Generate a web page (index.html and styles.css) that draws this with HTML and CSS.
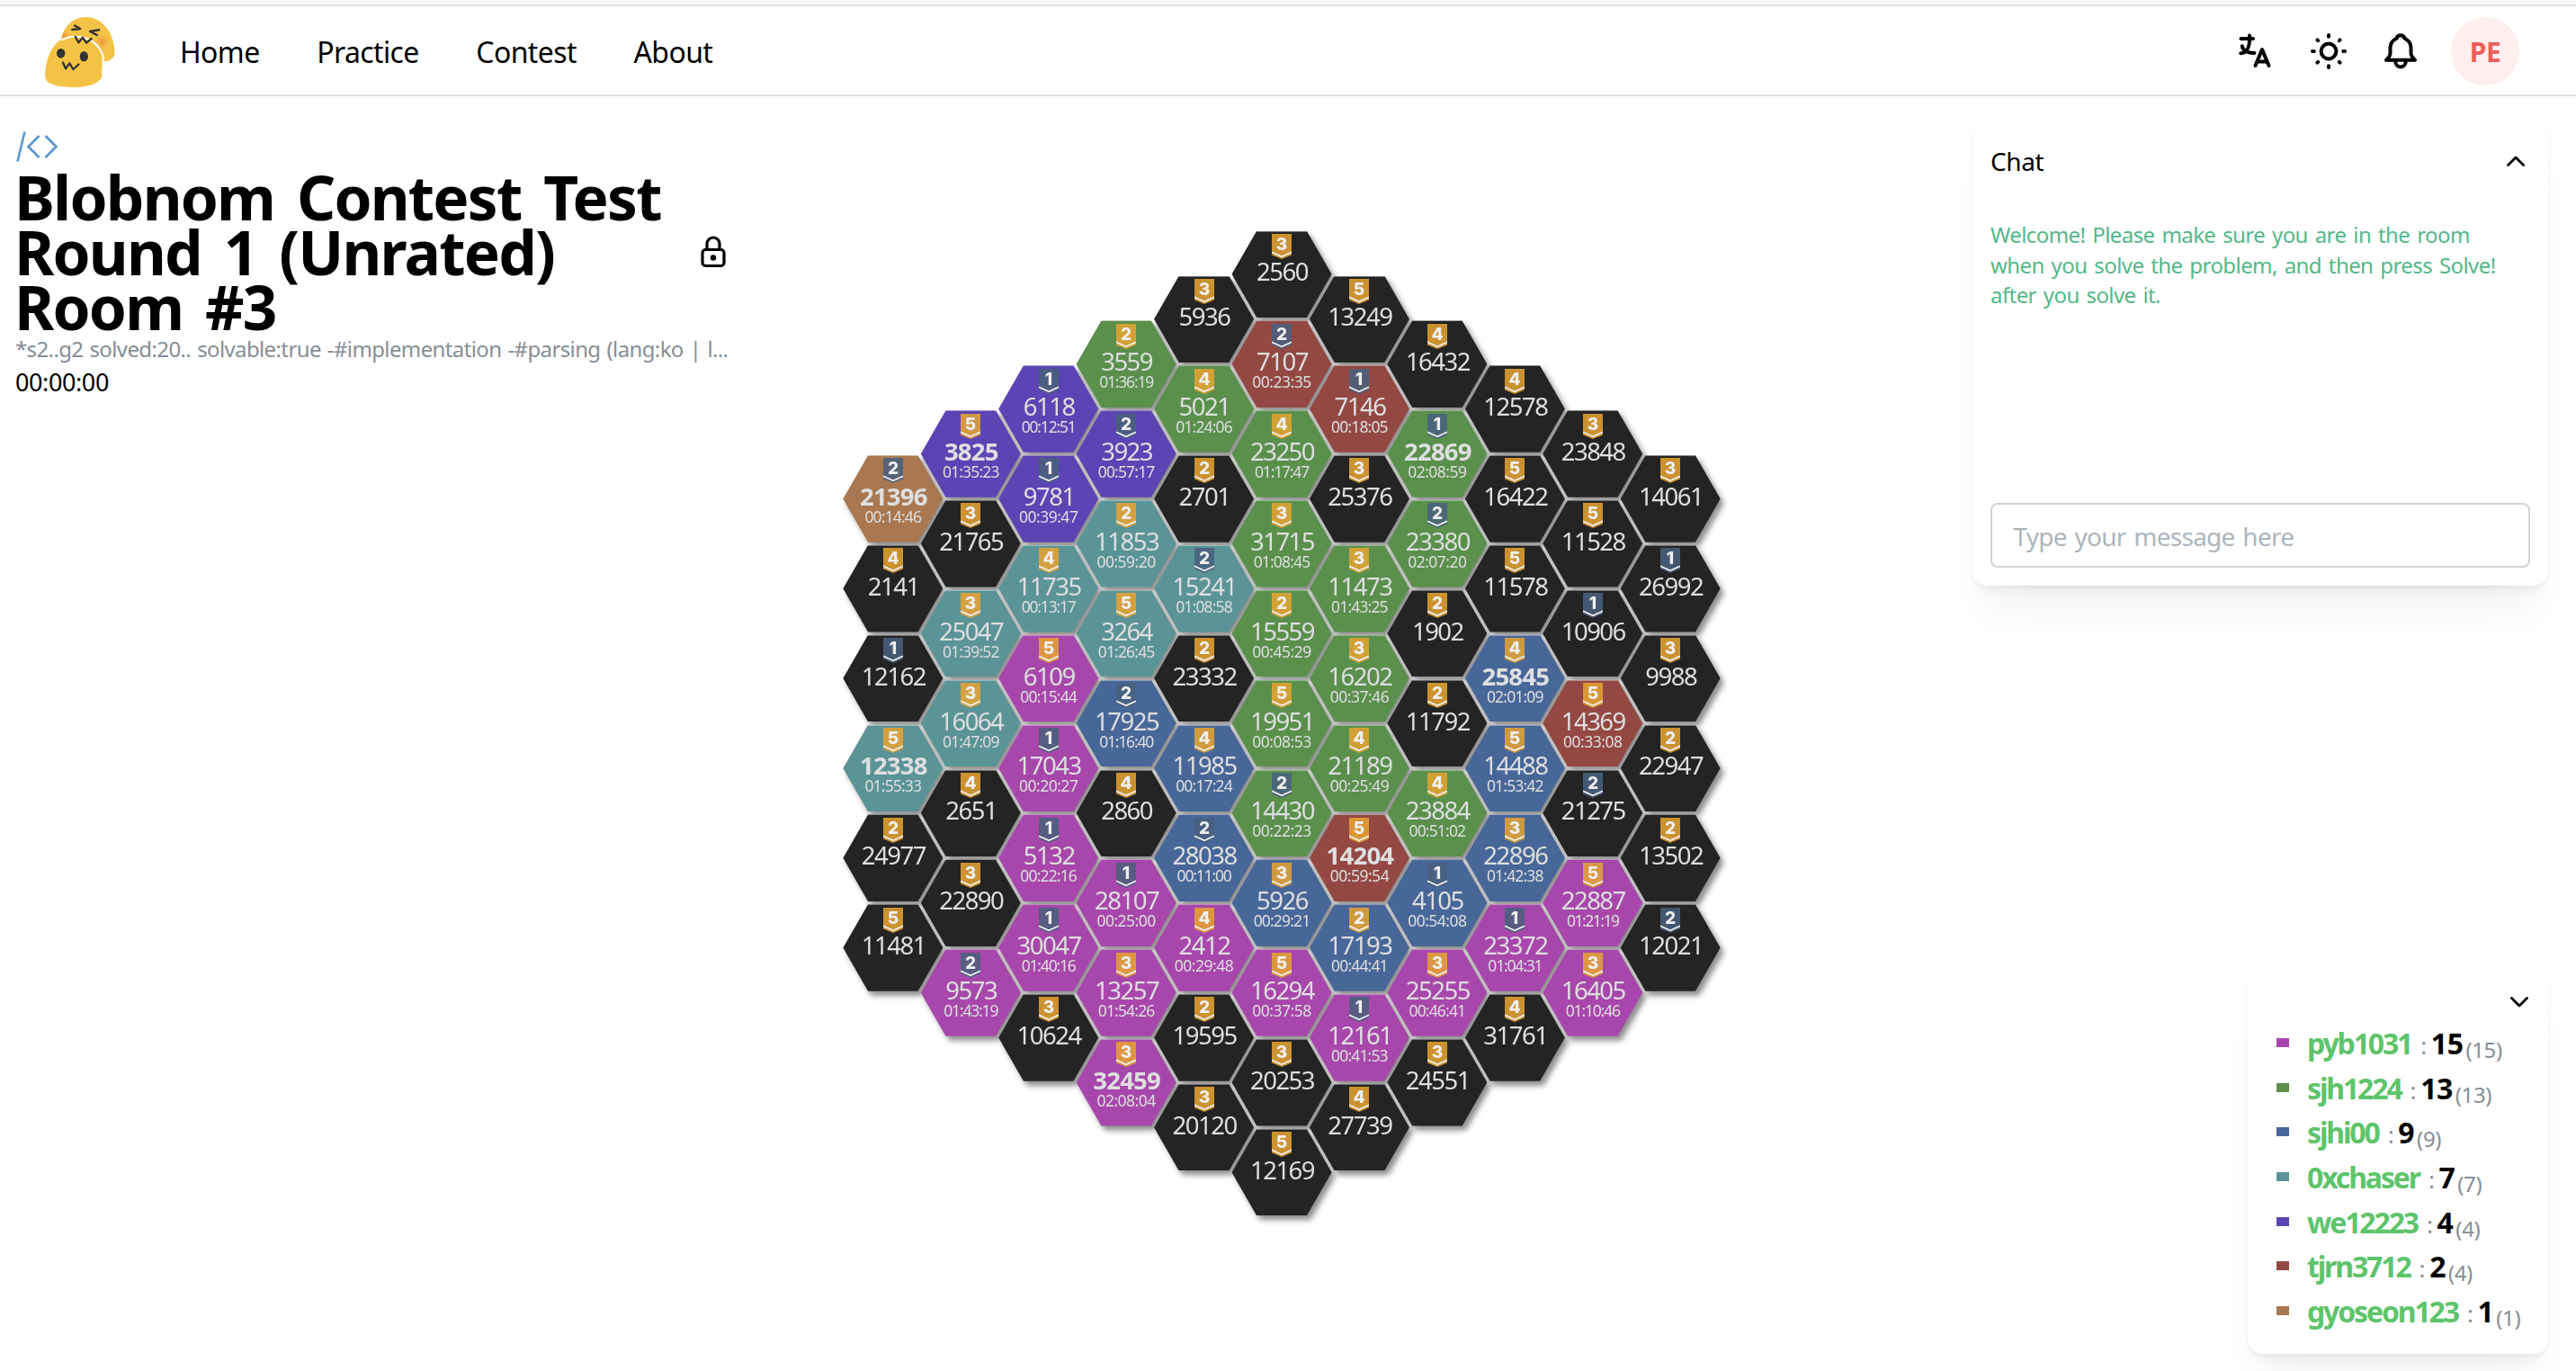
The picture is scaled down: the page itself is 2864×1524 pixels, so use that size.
FILE: index.html
```html
<!DOCTYPE html>
<html lang="en">
<head>
<meta charset="utf-8">
<title>Blobnom Contest Test Round 1 (Unrated) Room #3</title>
<link rel="stylesheet" href="styles.css">
</head>
<body>
<header class="header">
  <svg class="logo" viewBox="0 0 300 288" aria-label="Blobnom">
    <defs>
      <radialGradient id="blush"><stop offset="0" stop-color="#ec8f42"/><stop offset="1" stop-color="#f4c346" stop-opacity="0"/></radialGradient>
      <clipPath id="back"><path d="M83 112C88 60 122 27 167 27C225 27 262 85 263 146C263 160 248 173 228 176L200 150Z"/></clipPath>
    </defs>
    <g clip-path="url(#back)">
      <rect x="80" y="20" width="190" height="160" fill="#f4c346"/>
      <ellipse cx="92" cy="90" rx="30" ry="28" fill="url(#blush)"/>
      <ellipse cx="220" cy="108" rx="30" ry="30" fill="url(#blush)"/>
    </g>
    <path d="M31 225C30 160 62 92 122 91C180 91 222 130 221 185C220 200 217 205 220 215C224 240 190 261 125 261C70 261 32 250 31 225Z" fill="#f4c346"/>
    <path d="M84 104C150 70 226 112 226 178" class="blob-gap"/>
    <ellipse cx="83" cy="148" rx="14" ry="16" fill="#333"/>
    <ellipse cx="160" cy="158" rx="14" ry="17" fill="#333"/>
    <path class="blob-line" d="M89 176L99 199L112 181L124 201L144 183M130 90L142 112L156 95L168 113L187 97M127 54L148 66L118 69M213 69L180 75L206 88"/>
  </svg>
  <nav class="nav"><a>Home</a><a>Practice</a><a>Contest</a><a>About</a></nav>
  <div class="tools">
    <svg class="icon" viewBox="0 0 48 48"><path d="M8.5 11H22M18 7.5V12C18 20 15 27 8.3 27.2M9.8 19.3C10.5 24 14 26.8 23.4 27M24.5 41L32 23L39.5 41M27 36.6H37"/></svg>
    <svg class="icon" viewBox="0 0 48 48"><circle cx="24" cy="25" r="8.4"/><path d="M24 7V8.8M24 41.2V43M6 25H7.8M40.2 25H42M11.4 12.4L12.2 13.2M35.8 36.8L36.6 37.6M36.6 12.4L35.8 13.2M12.2 36.8L11.4 37.6"/></svg>
    <svg class="icon" viewBox="0 0 48 48"><path d="M24 7.2C21 7.2 20 8.6 19.5 10.7C14.5 13 12.5 16 12.5 21V27C12.5 30 11 32 8 34.8H40C37 32 35.5 30 35.5 27V21C35.5 16 33.5 13 28.5 10.7C28 8.6 27 7.2 24 7.2ZM18.2 36C18.2 40 21 42.4 24 42.4S29.8 40 29.8 36"/></svg>
    <span class="avatar">PE</span>
  </div>
</header>

<main class="room">
  <section class="info">
    <svg class="platform" viewBox="0 0 48 36"><path d="M9.5 1.5L1.5 34.5M25.5 6L13.5 18L25.5 30M32.5 6L44.5 18L32.5 30"/></svg>
    <div class="title-row">
      <h1 class="title">Blobnom Contest Test<br>Round 1 (Unrated)<br>Room #3</h1>
      <svg class="lock" viewBox="0 0 28 36"><rect x="2" y="15.5" width="24" height="18" rx="3.5"/><path d="M7 15V9a7 7 0 0 1 14 0V15"/><circle cx="14" cy="24.5" r="3.2"/></svg>
    </div>
    <p class="query">*s2..g2 solved:20.. solvable:true -#implementation -#parsing (lang:ko | l...</p>
    <p class="timer">00:00:00</p>
  </section>

  <section class="board" id="board"></section>

  <aside class="side">
    <section class="card chat">
      <div class="chat-head"><span>Chat</span><svg class="chevron" viewBox="0 0 22 14"><path d="M2.5 11.5L11 3L19.5 11.5"/></svg></div>
      <p class="chat-log">Welcome! Please make sure you are in the room<br>when you solve the problem, and then press Solve!<br>after you solve it.</p>
      <div class="chat-input">Type your message here</div>
    </section>
    <section class="card ranks">
      <svg class="chevron" viewBox="0 0 22 14"><path d="M2.5 2.5L11 11L19.5 2.5"/></svg>
      <ul class="rank-list" id="ranks"></ul>
    </section>
  </aside>
</main>
<script src="board.js"></script>
</body>
</html>
```

FILE: styles.css
```css
* { box-sizing: border-box; }
body {
  margin: 0;
  height: 1524px;
  overflow: hidden;
  background: #fff;
  color: #000;
  font-family: "Noto Sans", "Open Sans", sans-serif;
  letter-spacing: -0.4px;
  word-spacing: 1.4px;
}
h1, p, ul { margin: 0; padding: 0; list-style: none; }
svg { display: block; flex: none; }

/* header */
.header {
  display: flex;
  align-items: center;
  height: 107px;
  padding: 7px 63px 0 40px;
  border-bottom: 2px solid #dee2e6;
  background: linear-gradient(#f8f8f8 5px, #e0e0e0 5px, #e0e0e0 7px, #fff 7px);
}
.logo { width: 100px; height: 96px; margin-top: 4px; }
.blob-gap { fill: none; stroke: #fff; stroke-width: 6; }
.blob-line { fill: none; stroke: #333; stroke-width: 7; stroke-linejoin: round; }
.nav {
  display: flex;
  gap: 63.5px;
  margin-left: 60px;
  font-size: 32px;
  line-height: 44px;
  letter-spacing: -0.6px;
  padding-top: 4px;
}
.tools { display: flex; align-items: center; gap: 32px; margin-left: auto; }
.icon {
  width: 48px;
  height: 48px;
  fill: none;
  stroke: #000;
  stroke-width: 4;
  stroke-linecap: round;
  stroke-linejoin: round;
}
.icon:first-child { margin-right: 2px; }
.avatar {
  display: flex;
  align-items: center;
  justify-content: center;
  width: 76px;
  height: 76px;
  margin-top: 2px;
  border-radius: 50%;
  background: #feeeee;
  color: #ec5f5b;
  font-size: 30px;
  font-weight: 700;
}

/* page */
.room {
  display: grid;
  grid-template-columns: 794px 1226px 1fr;
  height: 1417px;
  padding: 0 31px 0 18px;
}
.info { padding-top: 38px; }
.platform {
  width: 48px;
  height: 36px;
  fill: none;
  stroke: #5b95d2;
  stroke-width: 2.6;
}
.title-row {
  display: flex;
  align-items: center;
  justify-content: space-between;
  margin-top: 8px;
  padding-right: 5px;
}
.title {
  margin-left: -2px;
  font-size: 67.5px;
  line-height: 61px;
  font-weight: 700;
  letter-spacing: -1.8px;
  word-spacing: 9px;
  white-space: nowrap;
}
.lock { width: 28px; height: 36px; margin-bottom: 2px; fill: none; stroke: #000; stroke-width: 3.2; }
.lock circle { fill: #000; stroke: none; }
.query {
  margin: -1px 0 0 -1px;
  color: #868e96;
  font-size: 24px;
  line-height: 34px;
  letter-spacing: -0.62px;
  white-space: nowrap;
}
.timer { margin: 1px 0 0 -1px; font-size: 27px; line-height: 38px; }

/* hexagon board: columns overlap their neighbours by the slanted edges */
.board {
  display: flex;
  align-items: center;
  justify-content: center;
  height: 1394px;
}
.column { display: flex; flex-direction: column; align-items: center; width: 86.45px; }
.hex {
  display: flex;
  align-items: center;
  height: 99.83px;
  filter: drop-shadow(4px 5px 3px rgba(0, 0, 0, .45));
}
.face {
  display: flex;
  flex-direction: column;
  align-items: center;
  width: 111px;
  height: 96.5px;
  padding-top: 3.3px;
  clip-path: polygon(25% 0, 75% 0, 100% 50%, 75% 100%, 25% 100%, 0 50%);
  background: linear-gradient(rgba(255, 255, 255, .35) 1px, transparent 1px) var(--fill);
  color: #dedfe0;
}
.free { --fill: #242424; }
.magenta { --fill: #a847ab; }
.green { --fill: #5a904c; }
.blue { --fill: #486799; }
.teal { --fill: #5b9497; }
.violet { --fill: #5c44b4; }
.red { --fill: #944843; }
.brown { --fill: #a97850; }
.badge { width: 22px; height: 28px; }
.badge text {
  fill: #f0eff0;
  font: 800 19px Inter, Roboto, sans-serif;
  letter-spacing: 0;
  text-anchor: middle;
}
.badge .shield { opacity: .87; }
.badge .mark { fill: none; stroke: #f0eff0; stroke-width: 1.7; }
.gold { fill: #e5a333; }
.silver { fill: #4a607d; }
.number {
  margin: 1.5px 0 0 1px;
  font-size: 27.5px;
  line-height: 26px;
  letter-spacing: -1.5px;
}
.number.own { font-weight: 700; letter-spacing: -.8px; }
.solved {
  font-size: 17.5px;
  line-height: 18px;
}

/* side column */
.side {
  display: flex;
  flex-direction: column;
  justify-content: space-between;
  align-items: flex-end;
  padding: 31px 0 19px;
}
.card {
  border-radius: 16px;
  background: #fff;
  box-shadow: 0 2px 6px rgba(0, 0, 0, .05), 0 40px 46px -14px rgba(0, 0, 0, .05), 0 14px 14px -8px rgba(0, 0, 0, .04);
}
.chevron {
  width: 22px;
  height: 14px;
  fill: none;
  stroke: #000;
  stroke-width: 2.8;
  stroke-linecap: round;
  stroke-linejoin: round;
}
.chat {
  display: flex;
  flex-direction: column;
  width: 640px;
  height: 513px;
  padding: 19px 20px 20px;
}
.chat-head {
  display: flex;
  align-items: center;
  justify-content: space-between;
  padding-right: 5px;
  font-size: 28px;
  line-height: 44px;
}
.chat-log {
  flex: 1;
  margin-top: 43px;
  color: #54b888;
  font-size: 24px;
  line-height: 33.6px;
  letter-spacing: -.58px;
  word-spacing: 2.2px;
  white-space: nowrap;
}
.chat-input {
  height: 72px;
  padding: 0 23.5px;
  border: 2px solid #ced4da;
  border-radius: 8px;
  color: #adb5bd;
  font-size: 28px;
  line-height: 71px;
  letter-spacing: -.75px;
  word-spacing: 2.2px;
}
.ranks {
  display: flex;
  flex-direction: column;
  width: 334px;
  height: 423px;
  padding: 25px 21px 0 32px;
}
.ranks .chevron { align-self: flex-end; }
.rank-list { margin-top: 14px; }
.rank {
  display: flex;
  align-items: baseline;
  height: 49.7px;
  font-size: 32px;
  line-height: 49.7px;
}
.swatch { width: 14px; height: 10px; margin-right: 20px; align-self: center; margin-bottom: 2px; background: var(--fill); }
.name { color: #5ec46a; font-weight: 700; letter-spacing: -2.15px; }
.colon { margin: 0 5px 0 10px; color: #868e96; font-size: 26px; }
.score { font-weight: 700; letter-spacing: -.5px; }
.total { position: relative; top: 4px; margin-left: 3px; color: #868e96; font-size: 24px; }
```

FILE: board.js
```js
// Columns from left to right; each cell is "problem tier [team time [own]]".
const columns = [
  ["21396 S2 brown 00:14:46 own", "2141 G4", "12162 S1", "12338 G5 teal 01:55:33 own", "24977 G2", "11481 G5"],
  ["3825 G5 violet 01:35:23 own", "21765 G3", "25047 G3 teal 01:39:52", "16064 G3 teal 01:47:09", "2651 G4", "22890 G3", "9573 S2 magenta 01:43:19"],
  ["6118 S1 violet 00:12:51", "9781 S1 violet 00:39:47", "11735 G4 teal 00:13:17", "6109 G5 magenta 00:15:44", "17043 S1 magenta 00:20:27", "5132 S1 magenta 00:22:16", "30047 S1 magenta 01:40:16", "10624 G3"],
  ["3559 G2 green 01:36:19", "3923 S2 violet 00:57:17", "11853 G2 teal 00:59:20", "3264 G5 teal 01:26:45", "17925 S2 blue 01:16:40", "2860 G4", "28107 S1 magenta 00:25:00", "13257 G3 magenta 01:54:26", "32459 G3 magenta 02:08:04 own"],
  ["5936 G3", "5021 G4 green 01:24:06", "2701 G2", "15241 S2 teal 01:08:58", "23332 G2", "11985 G4 blue 00:17:24", "28038 S2 blue 00:11:00", "2412 G4 magenta 00:29:48", "19595 G2", "20120 G3"],
  ["2560 G3", "7107 S2 red 00:23:35", "23250 G4 green 01:17:47", "31715 G3 green 01:08:45", "15559 G2 green 00:45:29", "19951 G5 green 00:08:53", "14430 S2 green 00:22:23", "5926 G3 blue 00:29:21", "16294 G5 magenta 00:37:58", "20253 G3", "12169 G5"],
  ["13249 G5", "7146 S1 red 00:18:05", "25376 G3", "11473 G3 green 01:43:25", "16202 G3 green 00:37:46", "21189 G4 green 00:25:49", "14204 G5 red 00:59:54 own", "17193 G2 blue 00:44:41", "12161 S1 magenta 00:41:53", "27739 G4"],
  ["16432 G4", "22869 S1 green 02:08:59 own", "23380 S2 green 02:07:20", "1902 G2", "11792 G2", "23884 G4 green 00:51:02", "4105 S1 blue 00:54:08", "25255 G3 magenta 00:46:41", "24551 G3"],
  ["12578 G4", "16422 G5", "11578 G5", "25845 G4 blue 02:01:09 own", "14488 G5 blue 01:53:42", "22896 G3 blue 01:42:38", "23372 S1 magenta 01:04:31", "31761 G4"],
  ["23848 G3", "11528 G5", "10906 S1", "14369 G5 red 00:33:08", "21275 S2", "22887 G5 magenta 01:21:19", "16405 G3 magenta 01:10:46"],
  ["14061 G3", "26992 S1", "9988 G3", "22947 G2", "13502 G2", "12021 S2"]
];

const badge = tier => `<svg class="badge" viewBox="0 0 22 28">
  <path class="shield ${tier[0] === "G" ? "gold" : "silver"}" d="M0 0H22V23.5L11 28L0 23.5Z"/>
  <path class="mark" d="M0 20.3L11 25.2L22 20.3"/><text x="11" y="17.6">${tier[1]}</text></svg>`;

const spacing = time => (-0.5 - 0.34 * (time.split("1").length - 1)).toFixed(2);

document.getElementById("board").innerHTML = columns.map(cells => `<div class="column">${cells.map(cell => {
  const [id, tier, team = "free", time, own = ""] = cell.split(" ");
  return `<div class="hex"><div class="face ${team}">${badge(tier)}<span class="number ${own}">${id}</span>${
    time ? `<span class="solved" style="letter-spacing:${spacing(time)}px">${time}</span>` : ""}</div></div>`;
}).join("")}</div>`).join("");

const ranks = [
  ["magenta", "pyb1031", 15, 15], ["green", "sjh1224", 13, 13], ["blue", "sjhi00", 9, 9],
  ["teal", "0xchaser", 7, 7], ["violet", "we12223", 4, 4], ["red", "tjrn3712", 2, 4], ["brown", "gyoseon123", 1, 1]
];
document.getElementById("ranks").innerHTML = ranks.map(([team, name, score, total]) =>
  `<li class="rank"><i class="swatch ${team}"></i><span class="name">${name}</span><span class="colon">:</span><span class="score">${score}</span><span class="total">(${total})</span></li>`).join("");
```
